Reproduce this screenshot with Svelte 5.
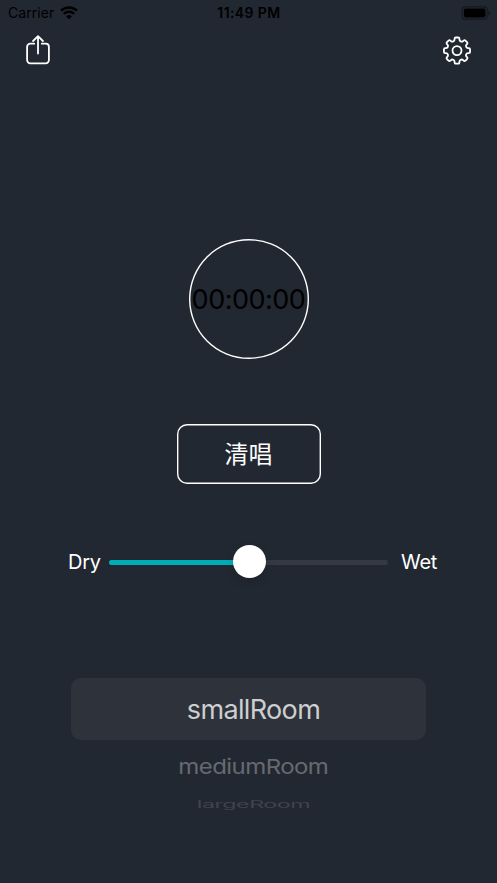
<script>
	let time = '00:00:00';
	let mix = 50;
	let rooms = ['smallRoom', 'mediumRoom', 'largeRoom'];

	// eight teeth, each one with a flat top and a flat valley
	function gearPath(outer, inner) {
		const points = [];
		for (let i = 0; i < 8; i++) {
			const mid = i * 45 - 90;
			for (const [r, offset] of [
				[inner, -14.5],
				[outer, -10.5],
				[outer, 10.5],
				[inner, 14.5]
			]) {
				const a = ((mid + offset) * Math.PI) / 180;
				points.push([15 + r * Math.cos(a), 15 + r * Math.sin(a)]);
			}
		}
		// round each corner a little
		const near = (p, q) => {
			const d = Math.hypot(q[0] - p[0], q[1] - p[1]);
			const t = Math.min(1.3 / d, 0.5);
			return [p[0] + (q[0] - p[0]) * t, p[1] + (q[1] - p[1]) * t];
		};
		let d = '';
		points.forEach((p, i) => {
			const a = near(p, points[(i + 31) % 32]);
			const b = near(p, points[(i + 1) % 32]);
			d += `${i ? 'L' : 'M'}${a.join(' ')}Q${p.join(' ')} ${b.join(' ')}`;
		});
		return d + 'Z';
	}
</script>

<div class="screen">
	<div class="status">
		<div class="carrier">
			<span class="carrier-name">Carrier</span>
			<svg class="wifi" width="18" height="14" viewBox="0 0 18 14">
				<path d="M1 4.7a11.6 11.6 0 0 1 16 0" />
				<path d="M3.8 7.8a7.6 7.6 0 0 1 10.4 0" />
				<path class="dot" d="M9 13.2 6.1 10.4a4.2 4.2 0 0 1 5.8 0z" />
			</svg>
		</div>
		<span class="clock">11:49 PM</span>
		<svg class="battery" width="30" height="14" viewBox="0 0 30 14">
			<rect class="case" x="1.1" y="0.9" width="25" height="12.2" rx="3.2" />
			<rect x="2.8" y="2.6" width="21.6" height="8.8" rx="1.8" />
			<path class="cap" d="M27.5 4.8q1.7.8 1.7 2.2t-1.7 2.2z" />
		</svg>
	</div>

	<div class="toolbar">
		<button aria-label="Share">
			<svg width="26" height="30" viewBox="0 0 26 30">
				<path d="M9.2 8.7H5.3a3.2 3.2 0 0 0-3.2 3.2v13.2a3.2 3.2 0 0 0 3.2 3.2h15.4a3.2 3.2 0 0 0 3.2-3.2V11.9a3.2 3.2 0 0 0-3.2-3.2h-3.9" />
				<path d="M13 18.5V1.5M8.1 6 13 1.2 17.9 6" />
			</svg>
		</button>
		<button aria-label="Settings">
			<svg width="30" height="30" viewBox="0 -0.6 30 30">
				<path d={gearPath(13.3, 10)} />
				<circle cx="15" cy="15" r="4.5" />
			</svg>
		</button>
	</div>

	<div class="timer"><span>{time}</span></div>

	<button class="mode">清唱</button>

	<div class="mixer">
		<span class="dry">Dry</span>
		<div class="track">
			<div class="fill" style="width: {mix}%"></div>
			<div class="thumb" style="left: {mix}%"></div>
		</div>
		<span class="wet">Wet</span>
	</div>

	<div class="picker">
		{#each rooms as room, i}
			<div class="row row-{i}"><span>{room}</span></div>
		{/each}
	</div>
</div>

<style>
	:global(body) {
		margin: 0;
		background: #222831;
	}

	.screen {
		width: 497px;
		height: 883px;
		overflow: hidden;
		display: flex;
		flex-direction: column;
		align-items: center;
		background: #222831;
		color: #fff;
		font-family: Inter, 'Noto Sans CJK SC', sans-serif;
	}

	button {
		padding: 0;
		border: 0;
		background: none;
		color: inherit;
		font: inherit;
	}

	svg {
		display: block;
	}

	.status {
		width: 100%;
		height: 25px;
		display: grid;
		grid-template-columns: 1fr auto 1fr;
		align-items: center;
		box-sizing: border-box;
		padding: 0 6px 0 8px;
		color: #000;
		font-size: 14px;
	}

	.carrier {
		display: flex;
		align-items: center;
		gap: 6px;
	}

	.carrier-name {
		letter-spacing: 0.05px;
	}

	.wifi path {
		fill: none;
		stroke: #000;
		stroke-width: 2.3;
	}

	.wifi .dot {
		fill: #000;
		stroke: none;
	}

	.clock {
		margin-right: 1px;
		font-weight: 600;
		font-size: 14px;
		letter-spacing: 0.4px;
	}

	.battery {
		justify-self: end;
	}

	.battery .case {
		fill: none;
		stroke: #14181e;
		stroke-width: 1.2;
	}

	.battery .cap {
		fill: #11151a;
	}

	.toolbar {
		width: 100%;
		height: 50px;
		display: flex;
		justify-content: space-between;
		align-items: center;
		box-sizing: border-box;
		padding: 0 25px;
	}

	.toolbar svg {
		fill: none;
		stroke: #fff;
		stroke-width: 1.8;
		stroke-linecap: round;
		stroke-linejoin: round;
	}

	.timer {
		width: 120px;
		height: 120px;
		margin-top: 164px;
		box-shadow: inset 0 0 0 1.4px #fff;
		border-radius: 50%;
		display: flex;
		justify-content: center;
		align-items: center;
		color: #000;
		font-size: 27px;
		letter-spacing: -0.5px;
		white-space: nowrap;
	}

	.mode {
		width: 144px;
		height: 60px;
		margin-top: 64.5px;
		padding-bottom: 3px;
		box-shadow: inset 0 0 0 1.4px #fff;
		border-radius: 10px;
		font-size: 24px;
		font-family: 'Noto Sans CJK SC', sans-serif;
	}

	.mixer {
		width: 369px;
		height: 40px;
		margin: 58.5px 0 0 8px;
		display: flex;
		align-items: center;
		font-size: 20px;
		letter-spacing: -0.3px;
	}

	.dry {
		width: 41px;
	}

	.track {
		position: relative;
		width: 279px;
		height: 5px;
		margin-top: 1px;
		border-radius: 3px;
		background: #353942;
	}

	.fill {
		height: 100%;
		border-radius: 3px;
		background: #00adb5;
	}

	.thumb {
		position: absolute;
		top: -15px;
		width: 33px;
		height: 33px;
		margin-left: -16px;
		border-radius: 50%;
		background: #fff;
		box-shadow: 0 4px 10px rgba(0, 0, 0, 0.15);
	}

	.wet {
		margin-left: 13px;
	}

	.picker {
		width: 355px;
		margin-top: 96px;
	}

	.row {
		display: flex;
		justify-content: center;
		align-items: center;
		padding-left: 10px;
		font-size: 27px;
		letter-spacing: -0.65px;
		white-space: nowrap;
	}

	.row-0 {
		height: 62px;
		border-radius: 10px;
		background: #2e323b;
		color: #cdced0;
	}

	.row-1 {
		height: 53px;
		color: #666a70;
	}

	.row-1 span {
		transform: scale(0.89, 0.76);
	}

	.row-2 {
		height: 22px;
		color: #3f444c;
	}

	.row-2 span {
		transform: scale(0.865, 0.36);
	}
</style>
